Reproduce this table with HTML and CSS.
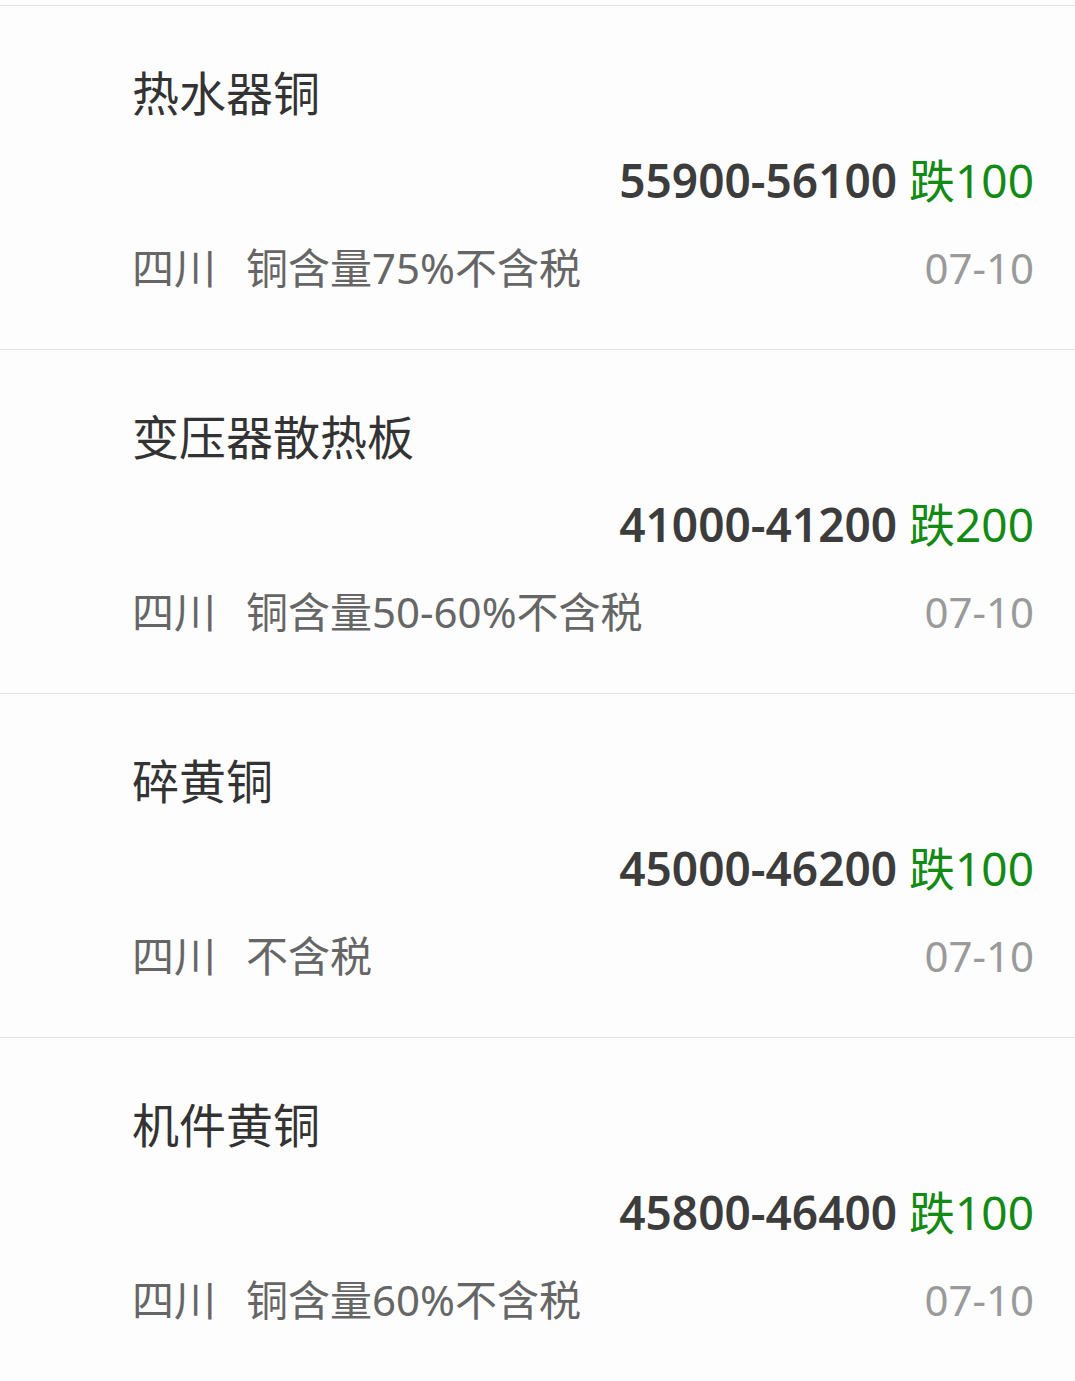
FILE: index.html
```html
<!DOCTYPE html>
<html lang="zh-CN">
<head>
<meta charset="utf-8">
<title>价格列表</title>
<link rel="stylesheet" href="styles.css">
</head>
<body>
<div class="list">
  <div class="row">
    <div class="title">热水器铜</div>
    <div class="price-line"><span class="price">55900-56100</span> <span class="change">跌100</span></div>
    <div class="meta"><span class="info"><span class="region">四川</span><span class="desc">铜含量75%不含税</span></span><span class="date">07-10</span></div>
  </div>
  <div class="row">
    <div class="title">变压器散热板</div>
    <div class="price-line"><span class="price">41000-41200</span> <span class="change">跌200</span></div>
    <div class="meta"><span class="info"><span class="region">四川</span><span class="desc">铜含量50-60%不含税</span></span><span class="date">07-10</span></div>
  </div>
  <div class="row">
    <div class="title">碎黄铜</div>
    <div class="price-line"><span class="price">45000-46200</span> <span class="change">跌100</span></div>
    <div class="meta"><span class="info"><span class="region">四川</span><span class="desc">不含税</span></span><span class="date">07-10</span></div>
  </div>
  <div class="row">
    <div class="title">机件黄铜</div>
    <div class="price-line"><span class="price">45800-46400</span> <span class="change">跌100</span></div>
    <div class="meta"><span class="info"><span class="region">四川</span><span class="desc">铜含量60%不含税</span></span><span class="date">07-10</span></div>
  </div>
</div>
</body>
</html>
```
FILE: styles.css
```css
html, body {
  margin: 0;
  padding: 0;
  background: #fdfdfd;
}
body {
  font-family: "Noto Sans", "Noto Sans CJK SC", sans-serif;
  color: #333;
}
.list {
  margin-top: 5px;
  border-top: 1px solid #e2e2e2;
}
.row {
  padding: 44px 41px 38px 132px;
  border-bottom: 1px solid #e2e2e2;
}
.title {
  font-size: 47px;
  line-height: 87px;
  height: 87px;
  color: #333;
  white-space: nowrap;
}
.price-line {
  text-align: right;
  font-size: 46px;
  line-height: 87px;
  height: 87px;
  white-space: nowrap;
}
.price {
  font-weight: 600;
  color: #3c3c3c;
}
.change {
  color: #138a13;
}
.meta {
  display: flex;
  justify-content: space-between;
  align-items: center;
  height: 87px;
  line-height: 87px;
  font-size: 42px;
  white-space: nowrap;
}
.info {
  color: #666;
}
.desc {
  margin-left: 30px;
}
.date {
  color: #9a9a9a;
}
```
